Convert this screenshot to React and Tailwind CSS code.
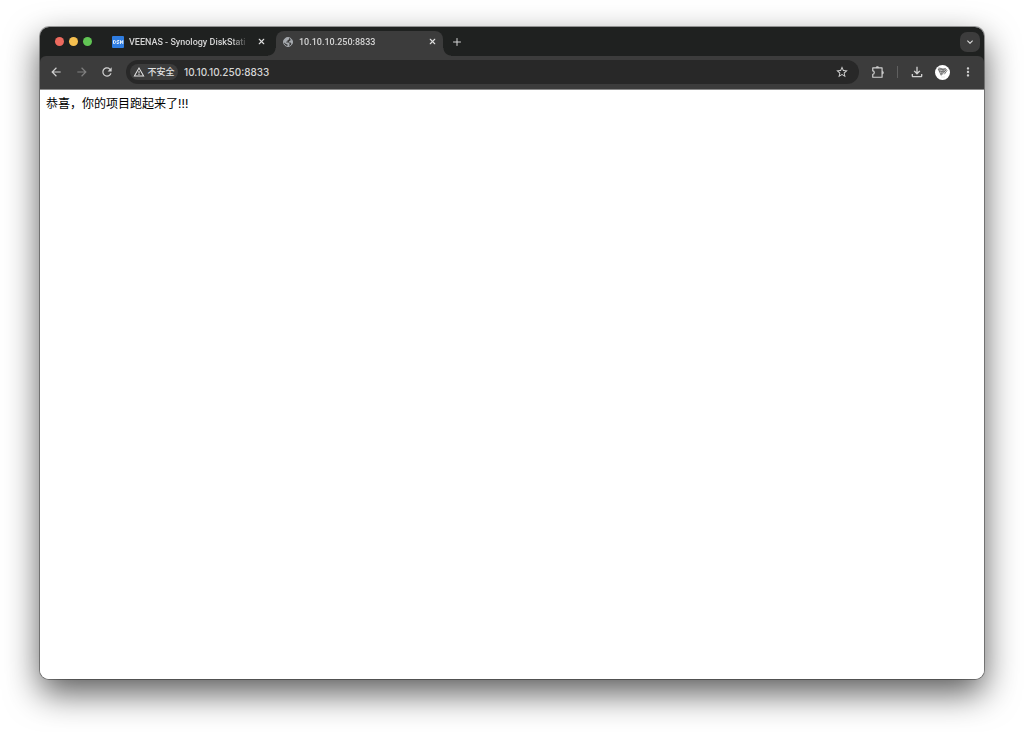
import React, { useState } from 'react';
import { Plus, X } from 'lucide-react';
import {
  MdArrowBack,
  MdArrowForward,
  MdRefresh,
  MdStarBorder,
  MdMoreVert,
  MdOutlineFileDownload,
  MdWarningAmber,
  MdKeyboardArrowDown,
} from 'react-icons/md';

const tabs = [
  { id: 'nas', title: 'VEENAS - Synology DiskStati' },
  { id: 'app', title: '10.10.10.250:8833' },
];

const DsmIcon = () => (
  <span className="flex h-3 w-3 shrink-0 items-center justify-center rounded-[1px] bg-[#2f7de1]">
    <svg viewBox="0 0 24 24" className="h-3 w-3" fill="none" stroke="#e4effc" strokeWidth="2">
      <path d="M3 9v6h1.500c2 0 3-1.200 3-3s-1-3-3-3z" />
      <path d="M14.500 9h-3c-2 0-2 3 0 3h1c2 0 2 3 0 3h-3" />
      <path d="M17 16V9l2.200 4L21.500 9v7" />
    </svg>
  </span>
);

const GlobeIcon = () => (
  <svg viewBox="0 0 24 24" className="h-3 w-3 shrink-0 text-[#a5a9ae]">
    <circle cx="12" cy="12" r="9" fill="none" stroke="currentColor" strokeWidth="2" />
    <path
      fill="currentColor"
      d="M3 12C3 6 7 3 12 3l2 1v3l-3 1.500V11H9l-1 2h5l2 2v3l-2 3h-2v-4l-3-1zM17 5l4 5v5l-2 1-2-3h-3v-2l3-2z"
    />
  </svg>
);

const ExtensionIcon = () => (
  <svg viewBox="0 0 24 24" className="h-3.5 w-3.5" fill="none" stroke="currentColor" strokeWidth="2" strokeLinejoin="round">
    <path d="M3 5h16v16H3v-5c3.500 0 3.500-6 0-6z" />
    <path d="M8.500 4.500c0-2.500 5-2.500 5 0zM19.500 10.500c2.500 0 2.500 5 0 5z" fill="currentColor" strokeWidth="1" />
  </svg>
);

const Avatar = () => (
  <svg viewBox="0 0 30 30" className="h-[15px] w-[15px]" fill="none" strokeLinecap="round" strokeLinejoin="round">
    <circle cx="15" cy="15" r="15" fill="#fff" />
    <path d="M7 8l15 2-9 10z" fill="#c4c4c4" stroke="#555" strokeWidth="1.500" />
    <path d="M8 6l8 2 5-1 3 4-5 7M9 12l5 1 3-3M12 18l4-6 4 2" stroke="#555" strokeWidth="1.500" />
    <path d="M13 24h6" stroke="#ccc" strokeWidth="1" />
  </svg>
);

const Tab = ({ tab, active, onSelect }) => (
  <div
    className={`relative flex h-[25px] items-center ${
      active ? 'w-[167px] rounded-t-lg bg-[#3c3c3c] px-1.5' : 'w-[170px] bg-transparent pl-1.5 pr-2.5'
    }`}
  >
    {active && (
      <>
        {/* flared corners where the tab meets the toolbar */}
        <span className="absolute -left-2 bottom-0 h-2 w-2 bg-[radial-gradient(circle_at_0_0,transparent_7px,#3c3c3c_8px)]" />
        <span className="absolute -right-2 bottom-0 h-2 w-2 bg-[radial-gradient(circle_at_100%_0,transparent_7px,#3c3c3c_8px)]" />
      </>
    )}
    <button
      type="button"
      onClick={onSelect}
      className="-mt-1 flex h-5 min-w-0 flex-1 items-center gap-[5px] text-left"
    >
      {tab.id === 'nas' ? <DsmIcon /> : <GlobeIcon />}
      <span className="flex-1 overflow-hidden whitespace-nowrap font-['Roboto','Noto_Sans_CJK_SC',sans-serif] text-[9px] font-medium leading-3 text-[#d4d4d4] [mask-image:linear-gradient(to_right,#000_86%,transparent)]">
        {tab.title}
      </span>
    </button>
    <button type="button" aria-label="关闭标签页" className="-mt-1 ml-2 text-[#dddddd]">
      <X className="h-[9px] w-[9px]" strokeWidth={3} />
    </button>
  </div>
);

const App = () => {
  const [activeTab, setActiveTab] = useState('app');
  const [url, setUrl] = useState('10.10.10.250:8833');

  return (
    <div className="flex min-h-screen flex-col bg-white px-10 pb-[53px] pt-[27px] font-['Inter','Noto_Sans_CJK_SC',sans-serif]">
      <div className="flex flex-1 flex-col overflow-hidden rounded-[9px] bg-white shadow-[0_0_0_1px_rgba(0,0,0,0.35),0_14px_34px_rgba(0,0,0,0.65)]">
        {/* Tab strip */}
        <div className="flex h-[29px] items-end bg-[#1f2120] pr-1">
          <div className="flex h-[29px] items-center gap-[5px] pl-[15px] pr-3.5">
            <span className="h-[9px] w-[9px] rounded-full bg-[#ed6a5e]" />
            <span className="h-[9px] w-[9px] rounded-full bg-[#f5bf4f]" />
            <span className="h-[9px] w-[9px] rounded-full bg-[#61c554]" />
          </div>
          <div className="flex items-end">
            {tabs.map((tab) => (
              <Tab
                key={tab.id}
                tab={tab}
                active={tab.id === activeTab}
                onSelect={() => setActiveTab(tab.id)}
              />
            ))}
          </div>
          <button type="button" aria-label="新标签页" className="ml-2 flex h-[29px] items-center text-[#d5d5d5]">
            <Plus className="h-3 w-3" strokeWidth={2} />
          </button>
          <button
            type="button"
            aria-label="搜索标签页"
            className="mb-1 ml-auto flex h-5 w-5 items-center justify-center rounded-[7px] bg-[#3c3c3c] text-[#e0e0e0]"
          >
            <MdKeyboardArrowDown className="h-3 w-3" />
          </button>
        </div>

        {/* Toolbar */}
        <div className="bg-[#1f2120]">
          <div className="flex h-[34px] items-center rounded-t-md border-b border-[#8a8a8a] bg-[#3c3c3c] px-[9px] pb-px text-[#d0d0d0]">
            <button type="button" aria-label="返回">
              <MdArrowBack className="h-3.5 w-3.5" />
            </button>
            <button type="button" aria-label="前进" className="ml-3 text-[#808080]">
              <MdArrowForward className="h-3.5 w-3.5" />
            </button>
            <button type="button" aria-label="重新加载" className="ml-[11px]">
              <MdRefresh className="h-3.5 w-3.5" />
            </button>
            <div className="ml-3 flex h-6 min-w-0 flex-1 items-center rounded-full bg-[#282828] pl-1 pr-2.5">
              <button
                type="button"
                className="flex h-4 w-12 shrink-0 items-center justify-center gap-0.5 rounded-full bg-[#3c3c3c] text-[9px] leading-3 text-[#e3e3e3]"
              >
                <MdWarningAmber className="h-3 w-3 shrink-0" />
                <span className="whitespace-nowrap font-medium">不安全</span>
              </button>
              <input
                type="text"
                aria-label="地址栏"
                value={url}
                onChange={(e) => setUrl(e.target.value)}
                className="ml-1.5 min-w-0 flex-1 bg-transparent text-[10px] font-medium leading-4 text-[#d6d6d6] outline-none"
              />
              <button type="button" aria-label="添加书签">
                <MdStarBorder className="h-3.5 w-3.5" />
              </button>
            </div>
            <button type="button" aria-label="扩展程序" className="ml-3">
              <ExtensionIcon />
            </button>
            <span className="ml-3 h-3 w-px bg-[#606060]" />
            <button type="button" aria-label="下载" className="ml-[11px]">
              <MdOutlineFileDownload className="h-4 w-4" />
            </button>
            <button type="button" aria-label="个人资料" className="ml-2.5">
              <Avatar />
            </button>
            <button type="button" aria-label="更多" className="ml-[11px]">
              <MdMoreVert className="h-3.5 w-3.5" />
            </button>
          </div>
        </div>

        {/* Page content */}
        <main className="flex-1 bg-white px-1.5 py-[5px] text-[12px] leading-[18px] text-black">
          <p>恭喜，你的项目跑起来了!!!</p>
        </main>
      </div>
    </div>
  );
};

export default App;
